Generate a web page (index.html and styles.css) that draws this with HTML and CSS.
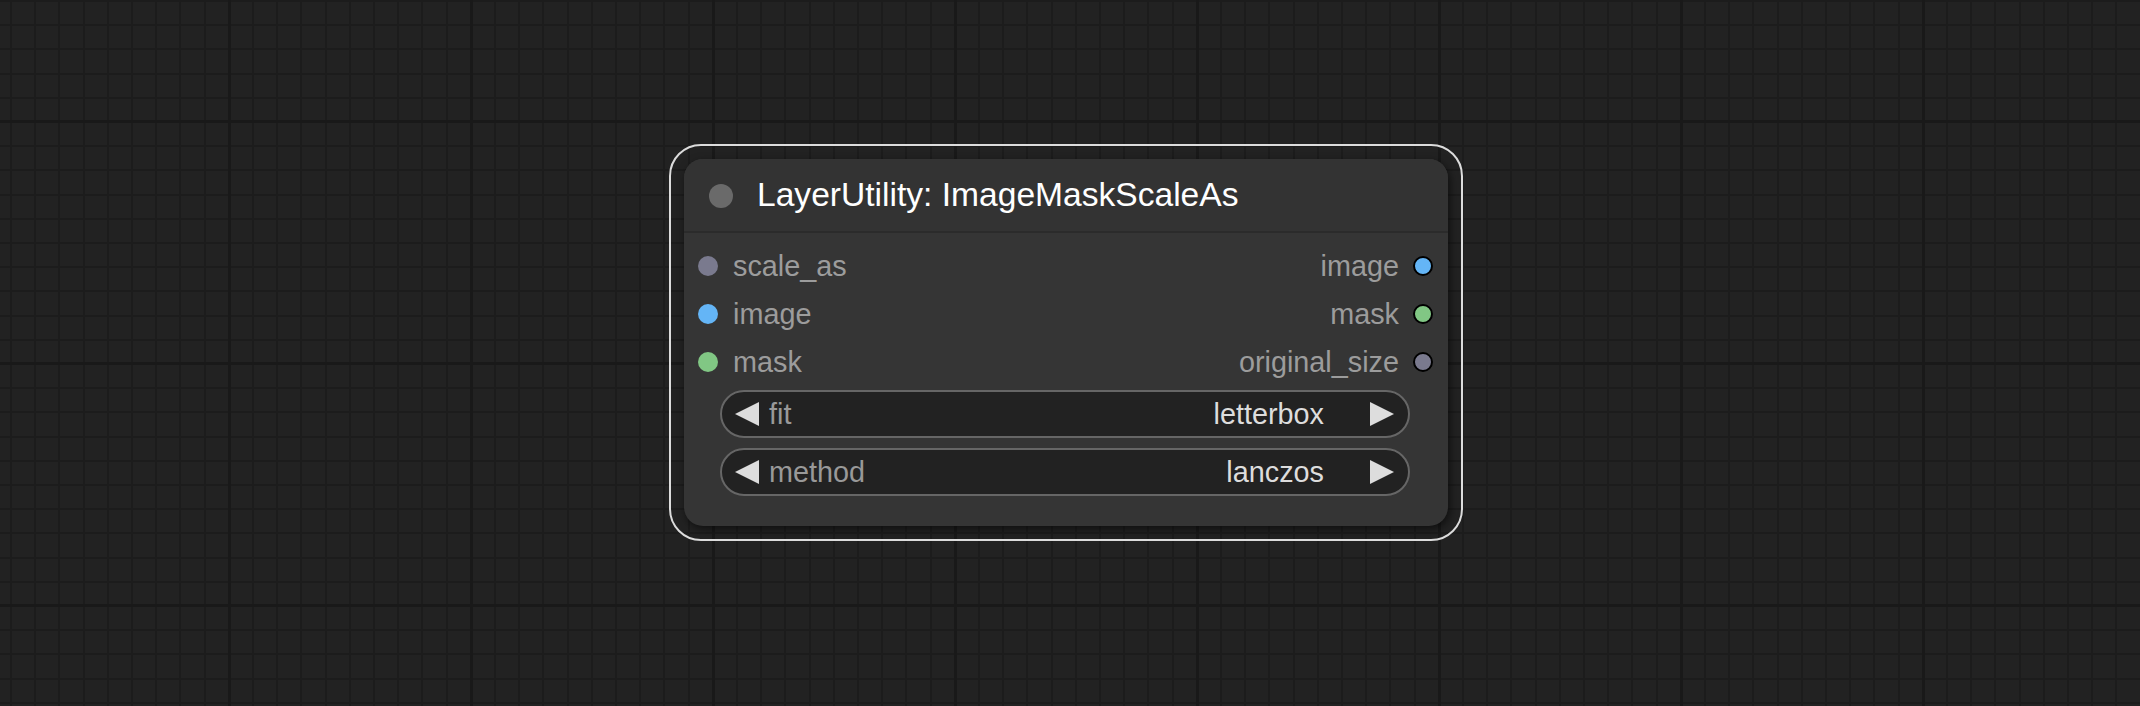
FILE: index.html
```html
<!DOCTYPE html>
<html>
<head>
<meta charset="utf-8">
<link rel="stylesheet" href="styles.css">
</head>
<body>
<div class="canvas">
  <div class="node-outline">
    <div class="node">
      <div class="title">
        <span class="title-dot"></span>
        <span class="title-text">LayerUtility: ImageMaskScaleAs</span>
      </div>
      <div class="slots">
        <div class="inputs">
          <div class="slot in"><span class="dot c-gray"></span><span class="slot-label">scale_as</span></div>
          <div class="slot in"><span class="dot c-blue"></span><span class="slot-label">image</span></div>
          <div class="slot in"><span class="dot c-green"></span><span class="slot-label">mask</span></div>
        </div>
        <div class="outputs">
          <div class="slot out"><span class="slot-label">image</span><span class="dot ring c-blue"></span></div>
          <div class="slot out"><span class="slot-label">mask</span><span class="dot ring c-green"></span></div>
          <div class="slot out"><span class="slot-label">original_size</span><span class="dot ring c-gray"></span></div>
        </div>
      </div>
      <div class="widgets">
        <div class="widget">
          <svg class="arrow left" width="24" height="24" viewBox="0 0 24 24"><polygon points="24,0 24,24 0,12" fill="#dddddd"/></svg>
          <span class="w-label">fit</span>
          <span class="w-value">letterbox</span>
          <svg class="arrow right" width="24" height="24" viewBox="0 0 24 24"><polygon points="0,0 0,24 24,12" fill="#dddddd"/></svg>
        </div>
        <div class="widget">
          <svg class="arrow left" width="24" height="24" viewBox="0 0 24 24"><polygon points="24,0 24,24 0,12" fill="#dddddd"/></svg>
          <span class="w-label">method</span>
          <span class="w-value">lanczos</span>
          <svg class="arrow right" width="24" height="24" viewBox="0 0 24 24"><polygon points="0,0 0,24 24,12" fill="#dddddd"/></svg>
        </div>
      </div>
    </div>
  </div>
</div>
</body>
</html>
```

FILE: styles.css
```css
html, body {
  margin: 0;
  padding: 0;
  width: 2140px;
  height: 706px;
  overflow: hidden;
}

.canvas {
  position: relative;
  width: 2140px;
  height: 706px;
  background-color: #222222;
  background-image:
    repeating-linear-gradient(to right, transparent 0 227.5px, #191919 227.5px 230.5px, transparent 230.5px 242px),
    repeating-linear-gradient(to bottom, transparent 0 120px, #191919 120px 123px, transparent 123px 242px),
    repeating-linear-gradient(to right, transparent 0 10px, #1c1c1c 10px 12px, transparent 12px 24.2px),
    repeating-linear-gradient(to bottom, #1c1c1c 0 2px, transparent 2px 24.2px);
  font-family: "Liberation Sans", Arial, sans-serif;
}

.node-outline {
  position: absolute;
  left: 669px;
  top: 144px;
  border: 2px solid #dcdcdc;
  border-radius: 32px;
  padding: 13px;
}

.node {
  width: 764px;
  height: 367px;
  background: #353535;
  border-radius: 19px;
  box-shadow: 2px 3px 8px rgba(0, 0, 0, 0.55);
  display: flex;
  flex-direction: column;
  overflow: hidden;
}

.title {
  height: 72px;
  background: #333333;
  border-bottom: 2px solid #2b2b2b;
  display: flex;
  align-items: center;
  padding-left: 24px;
}

.title-dot {
  width: 24px;
  height: 24px;
  border-radius: 50%;
  background: #6a6a6a;
  margin-left: 1px;
  margin-top: 1px;
}

.title-text {
  margin-left: 24px;
  font-size: 33.6px;
  line-height: 72px;
  color: #ffffff;
}

.slots {
  display: flex;
  justify-content: space-between;
  padding-top: 9px;
}

.inputs, .outputs {
  display: flex;
  flex-direction: column;
}

.slot {
  height: 48px;
  display: flex;
  align-items: center;
}

.slot.in {
  padding-left: 14px;
}

.slot.out {
  padding-right: 15px;
  justify-content: flex-end;
}

.slot-label {
  font-size: 28.8px;
  line-height: 48px;
  color: #9c9c9c;
}

.slot.in .slot-label {
  margin-left: 15px;
}

.slot.out .slot-label {
  margin-right: 14px;
}

.dot {
  width: 20px;
  height: 20px;
  border-radius: 50%;
  box-sizing: border-box;
  flex: none;
}

.dot.ring {
  border: 2px solid #000000;
}

.c-gray { background: #7a7a8e; }
.c-blue { background: #64b5f6; }
.c-green { background: #81c784; }

.widgets {
  display: flex;
  flex-direction: column;
  gap: 10px;
  padding: 4px 38px 0 36px;
}

.widget {
  height: 48px;
  box-sizing: border-box;
  border: 2px solid #666666;
  border-radius: 24px;
  background: #222222;
  display: flex;
  align-items: center;
}

.arrow {
  flex: none;
}

.arrow.left {
  margin-left: 13px;
}

.arrow.right {
  margin-left: 46px;
  margin-right: 14px;
}

.w-label {
  margin-left: 10px;
  font-size: 28.8px;
  line-height: 44px;
  color: #999999;
  flex: 1;
}

.w-value {
  font-size: 28.8px;
  line-height: 44px;
  color: #dddddd;
}
```
